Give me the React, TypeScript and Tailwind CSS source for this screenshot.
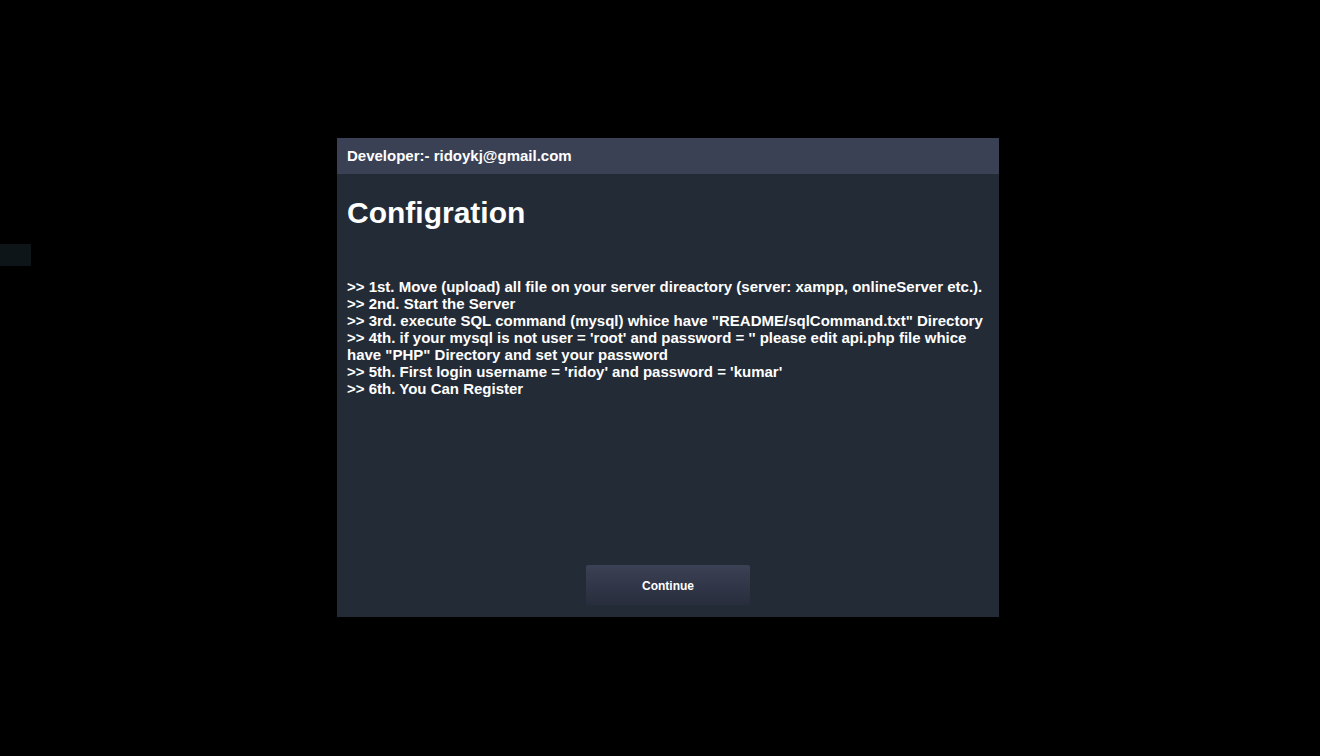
export default function App() {
  const lines = [
    ">> 1st. Move (upload) all file on your server direactory (server: xampp, onlineServer etc.).",
    ">> 2nd. Start the Server",
    '>> 3rd. execute SQL command (mysql) whice have "README/sqlCommand.txt" Directory',
    ">> 4th. if your mysql is not user = 'root' and password = '' please edit api.php file whice have \"PHP\" Directory and set your password",
    ">> 5th. First login username = 'ridoy' and password = 'kumar'",
    ">> 6th. You Can Register",
  ];

  return (
    <div className="relative flex h-[756px] w-[1320px] items-start bg-black font-['Liberation_Sans',Arial,sans-serif] text-white">
      {/* stray strip on the left edge */}
      <div className="absolute left-0 top-[244px] h-[22px] w-[31px] bg-[#0e1518]" />

      <div className="ml-[337px] mt-[138px] flex h-[479px] w-[662px] flex-col bg-[#232b36]">
        <div className="flex h-[36px] items-center bg-[#3b4155] px-[10px] text-[15px] font-bold">
          Developer:- ridoykj@gmail.com
        </div>
        <div className="flex flex-1 flex-col px-[10px]">
          <h1 className="mt-[20px] text-[30px] font-bold leading-[38px]">Configration</h1>
          <div className="mt-[46px] text-[15px] font-bold leading-[17px]">
            {lines.map((l) => (
              <p key={l}>{l}</p>
            ))}
          </div>
          <div className="mt-auto mb-[12px] flex justify-center">
            <button
              type="button"
              className="h-[40px] w-[164px] rounded-[2px] bg-gradient-to-b from-[#3c4255] to-[#272d3c] pt-[2px] text-[12px] font-bold text-white"
            >
              Continue
            </button>
          </div>
        </div>
      </div>
    </div>
  );
}
